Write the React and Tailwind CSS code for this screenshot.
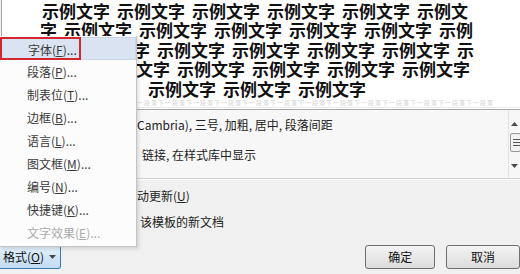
import React from 'react';

const cjk = { fontFamily: '"Noto Sans CJK SC", "Noto Sans", sans-serif' };

const previewRows = [
  { pl: 'pl-[40px]', items: ['示例文字', '示例文字', '示例文字', '示例文字', '示例文字', '示例文'] },
  { pl: 'pl-[38px]', items: ['字', '示例文字', '示例文字', '示例文字', '示例文字', '示例文字', '示例'] },
  { pl: 'pl-[5px]', items: ['示例文字', '示例文字', '示例文字', '示例文字', '示例文字', '示例文字', '示'] },
  { pl: 'pl-[25px]', items: ['示例文字', '示例文字', '示例文字', '示例文字', '示例文字', '示例文字'] },
  { pl: 'pl-[146px]', items: ['示例文字', '示例文字', '示例文字'] },
];

const menuItems = [
  { label: '字体', key: 'F', active: true },
  { label: '段落', key: 'P' },
  { label: '制表位', key: 'T' },
  { label: '边框', key: 'B' },
  { label: '语言', key: 'L' },
  { label: '图文框', key: 'M' },
  { label: '编号', key: 'N' },
  { label: '快捷键', key: 'K' },
  { label: '文字效果', key: 'E', disabled: true },
];

const Arrow = ({ up }) => (
  <svg width="7" height="4" viewBox="0 0 7 4" className="block">
    <path d={up ? 'M0 4 L3.5 0 L7 4 Z' : 'M0 0 L3.5 4 L7 0 Z'} fill="#4a4a4a" />
  </svg>
);

const App = () => {
  return (
    <div className="relative w-[520px] h-[274px] overflow-hidden bg-[#f0f0f0] text-[#1a1a1a]" style={cjk}>
      {/* preview box */}
      <div className="h-[110px] ml-[1px] pt-[1px] bg-white border-l border-b border-[#a8a8a8] overflow-hidden">
        {previewRows.map((row, i) => (
          <div key={i} className={`flex gap-[7px] whitespace-nowrap text-[17px] font-bold leading-[19.4px] text-[#111] ${row.pl}`}>
            {row.items.map((t, j) => (
              <span key={j}>{t}</span>
            ))}
          </div>
        ))}
        <div className="mt-[1px] whitespace-nowrap text-[6px] leading-[8px] text-[#d2d2d2] tracking-[1px] pl-[2px] border-b border-[#ececec]">
          段落下一段落下一段落下一段落下一段落下一段落下一段落下一段落下一段落下一段落下一段落下一段落下一段落下一段落下一段落下一段落下一段落下一段落
        </div>
      </div>

      {/* description */}
      <div className="flex h-[69px] bg-[#f7f7f7] border-b border-[#cfcfcf]">
        <div className="flex-1 pl-[137px] pt-[6px] text-[12px] leading-[18px] text-[#222]">
          <div>Cambria), 三号, 加粗, 居中, 段落间距</div>
          <div className="mt-[12px] pl-[5px]">链接, 在样式库中显示</div>
        </div>
        <div className="w-[12px] flex flex-col items-center pt-[12px] border-l border-[#e2e2e2]">
          <Arrow up />
          <div className="mt-[7px] w-[11px] h-[19px] ml-[2px] rounded-[2px] border border-[#9a9a9a] bg-[#f2f2f2] flex flex-col justify-center gap-[2px] pl-[2px]">
            <div className="h-px w-[8px] bg-[#555]" />
            <div className="h-px w-[8px] bg-[#555]" />
            <div className="h-px w-[8px] bg-[#555]" />
          </div>
          <div className="mt-[12px]">
            <Arrow />
          </div>
        </div>
      </div>
      <div className="h-px bg-white" />

      {/* options */}
      <div className="pt-[7px] pl-[137px] text-[12px] leading-[18px] text-[#222]">
        <div>
          动更新(<span className="underline">U</span>)
        </div>
        <div className="mt-[8px] pl-[3px]">该模板的新文档</div>
      </div>

      {/* buttons */}
      <div className="flex mt-[14px] text-[12px]">
        <button className="w-[65px] h-[24px] flex items-center pl-[3px] gap-[5px] rounded-r-[3px] border border-l-0 border-[#3d7bad] bg-gradient-to-b from-[#e3f0fc] to-[#c2dcf4] text-[#111]">
          <span>
            格式(<span className="underline">O</span>)
          </span>
          <Arrow />
        </button>
        <button className="ml-[304px] w-[74px] h-[24px] rounded-[3px] border border-[#707070] bg-gradient-to-b from-[#f4f4f4] to-[#dcdcdc] text-[#111]">
          确定
        </button>
        <button className="ml-[11px] w-[74px] h-[24px] shrink-0 rounded-[3px] border border-[#707070] bg-gradient-to-b from-[#f4f4f4] to-[#dcdcdc] text-[#111]">
          取消
        </button>
      </div>

      {/* popup menu */}
      <div className="absolute left-0 top-[36px] w-[137px] pt-[1px] pb-[2px] bg-[#fcfcfc] border-r border-b border-[#c4c4c4] shadow-[2px_2px_3px_rgba(0,0,0,0.12)]">
        {menuItems.map((item) => (
          <div
            key={item.key}
            className={`relative h-[23px] leading-[23px] pl-[27px] text-[12px] ${
              item.disabled ? 'text-[#ababab]' : 'text-[#3a3a3a]'
            } ${item.active ? 'bg-[#d9e3f1] border border-[#c7d5ea] leading-[21px] pl-[26px]' : ''}`}
          >
            {item.label}(<span className="underline">{item.key}</span>)...
            {item.active && (
              <div className="absolute left-[-1px] top-[-1px] w-[81px] h-[23px] border-2 border-[#d4262e]" />
            )}
          </div>
        ))}
      </div>
    </div>
  );
};

export default App;
